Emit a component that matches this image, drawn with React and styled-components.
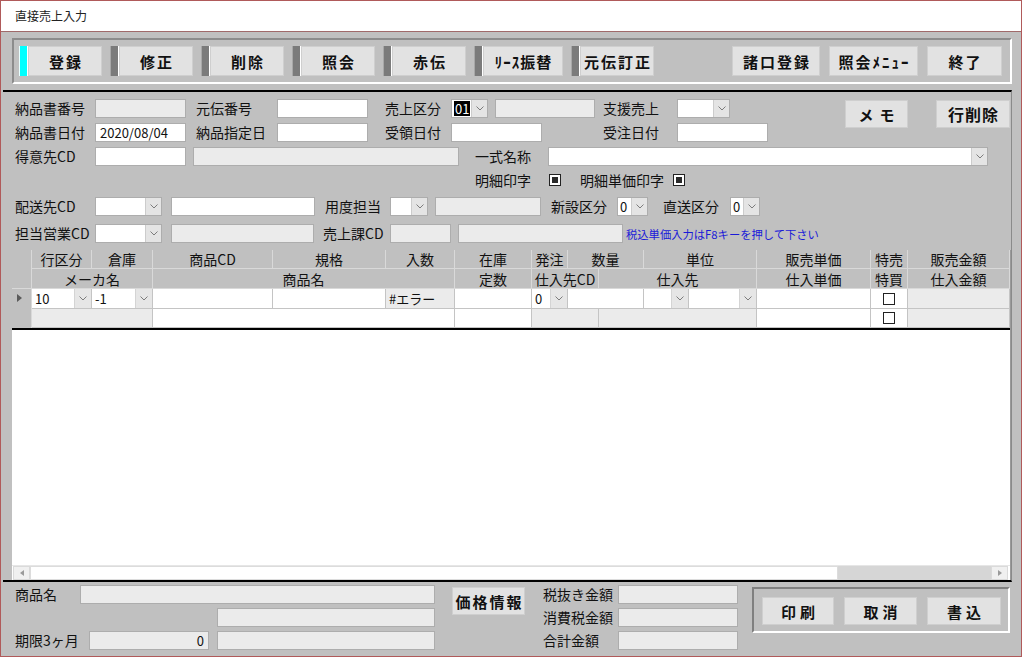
import styled, { createGlobalStyle } from 'styled-components';

const FONT = '"Noto Sans CJK JP", "Noto Sans", sans-serif';

const GlobalStyle = createGlobalStyle`
  html, body { margin: 0; padding: 0; background: #ffffff; }
  body { font-family: ${FONT}; color: #111111; }
  *, *::before, *::after { box-sizing: border-box; }
  button { font-family: ${FONT}; }
`;

const Window = styled.div`
  width: 1022px;
  height: 657px;
  border: 1px solid #b05a5a;
  background: #c0c0c0;
  display: flex;
  flex-direction: column;
  overflow: hidden;
`;

const TitleBar = styled.div`
  height: 31px;
  flex: none;
  background: #ffffff;
  border-bottom: 1px solid #a06a6a;
  padding: 0 0 1px 14px;
  display: flex;
  align-items: center;
  font-size: 12px;
  color: #222222;
`;

const Toolbar = styled.div`
  flex: none;
  margin: 6px 9px 0 11px;
  height: 46px;
  border: 2px solid;
  border-color: #8c8c8c #ffffff #ffffff #8c8c8c;
  display: flex;
  align-items: center;
  padding: 0 8px 0 5px;
`;

const ToolGroup = styled.div`
  display: flex;
  margin-right: 8px;
`;

const Indicator = styled.span`
  width: 9px;
  height: 30px;
  background: ${(p) => (p.$active ? '#00ffff' : '#7b7b7b')};
  border-left: 1px solid ${(p) => (p.$active ? '#e8ffff' : '#a8a8a8')};
  border-right: 1px solid #ffffff;
`;

const ToolButton = styled.button`
  width: ${(p) => p.$w || 74}px;
  height: ${(p) => p.$h || 30}px;
  flex: none;
  margin-left: ${(p) => p.$ml || 0}px;
  margin-top: ${(p) => p.$mt || 0}px;
  background: #e2e2e2;
  border: 1px solid #cfcfcf;
  font-size: ${(p) => p.$size || 15}px;
  font-weight: bold;
  letter-spacing: ${(p) => p.$ls ?? 2}px;
  padding: 0 0 0 ${(p) => p.$ls ?? 2}px;
  color: #111111;
  white-space: nowrap;
`;

const RightTools = styled.div`
  margin-left: auto;
  display: flex;
  gap: 9px;
`;

const MainPanel = styled.div`
  flex: none;
  margin: 6px 9px 0 2px;
  height: 492px;
  border-top: 2px solid #000000;
  border-bottom: 2px solid #000000;
  border-right: 1px solid #8a8a8a;
  display: flex;
  flex-direction: column;
`;

const Form = styled.div`
  flex: none;
  height: 158px;
  padding: 7px 0 0 12px;
`;

const TopBlock = styled.div`
  display: flex;
`;

const TopRows = styled.div`
  display: flex;
  flex-direction: column;
  gap: 5px;
`;

const SideButtons = styled.div`
  margin-left: auto;
  margin-top: 1px;
  display: flex;
  gap: 28px;
  padding-right: 1px;
`;

const FormRow = styled.div`
  display: flex;
  align-items: center;
  height: ${(p) => p.$h || 19}px;
  margin-top: ${(p) => p.$mt || 0}px;
`;

const Label = styled.span`
  flex: none;
  width: ${(p) => p.$w}px;
  margin-left: ${(p) => p.$ml || 0}px;
  font-size: 14px;
  line-height: 19px;
  white-space: nowrap;
  color: #111111;
`;

const Field = styled.div`
  flex: none;
  width: ${(p) => p.$w}px;
  height: 19px;
  margin-left: ${(p) => p.$ml || 0}px;
  background: ${(p) => (p.$gray ? '#ebebeb' : '#ffffff')};
  border: 1px solid #adadad;
  display: flex;
  align-items: center;
  justify-content: ${(p) => (p.$right ? 'flex-end' : 'flex-start')};
  padding: 0 4px;
  font-size: 13px;
  white-space: nowrap;
`;

const ComboBox = styled.div`
  flex: none;
  width: ${(p) => p.$w}px;
  height: 19px;
  margin-left: ${(p) => p.$ml || 0}px;
  display: flex;
  background: #ffffff;
  border: 1px solid #adadad;
`;

const ComboText = styled.span`
  flex: 1;
  display: flex;
  align-items: center;
  padding-left: 2px;
  font-size: 13px;
  overflow: hidden;
`;

const Selected = styled.span`
  background: #000000;
  color: #ffffff;
  line-height: 15px;
  padding: 0 1px;
`;

const DropButton = styled.span`
  flex: none;
  width: 16px;
  background: #e4e4e4;
  border-left: 1px solid #cccccc;
  display: flex;
  align-items: center;
  justify-content: center;
`;

const CheckMark = styled.span`
  flex: none;
  width: 12px;
  height: 12px;
  border: 1px solid #222222;
  background: #ffffff;
  display: flex;
  align-items: center;
  justify-content: center;
  &::after {
    content: '';
    width: 6px;
    height: 6px;
    background: ${(p) => (p.$on ? '#2a2a2a' : 'transparent')};
  }
`;

const Note = styled.span`
  margin-left: ${(p) => p.$ml || 0}px;
  font-size: 11.3px;
  color: #1a1ad8;
  white-space: nowrap;
`;

const GridArea = styled.div`
  flex: 1;
  margin-left: 9px;
  width: 999px;
  background: #ffffff;
  border-right: 1px solid #9a9a9a;
  display: flex;
  flex-direction: column;
`;

const Sheet = styled.div`
  display: grid;
  grid-template-columns: 20px 60px 61px 120px 113px 69px 77px 36px 31px 45px 45px 68px 114px 37px 102px;
  grid-template-rows: 19px 20px 20px 19px;
  border-bottom: 2px solid #000000;
`;

const HeadCell = styled.div`
  grid-column: ${(p) => p.$col};
  grid-row: ${(p) => p.$row};
  background: #c0c0c0;
  border-right: 1px solid #d9d9d9;
  border-bottom: 1px solid #d9d9d9;
  display: flex;
  align-items: center;
  justify-content: center;
  font-size: 14px;
  white-space: nowrap;
`;

const Selector = styled.div`
  grid-column: 1;
  grid-row: 3 / 5;
  background: #c0c0c0;
  border-right: 1px solid #d9d9d9;
  padding: 5px 0 0 5px;
  &::before {
    content: '';
    display: block;
    width: 0;
    height: 0;
    border-left: 5px solid #5a5a5a;
    border-top: 4.5px solid transparent;
    border-bottom: 4.5px solid transparent;
  }
`;

const DataCell = styled.div`
  grid-column: ${(p) => p.$col};
  grid-row: ${(p) => p.$row};
  background: ${(p) => (p.$gray ? '#ebebeb' : '#ffffff')};
  border-right: 1px solid #c4c4c4;
  border-bottom: 1px solid #c4c4c4;
  display: flex;
  align-items: center;
  justify-content: ${(p) => (p.$center ? 'center' : 'flex-start')};
  font-size: 13px;
  padding-left: ${(p) => (p.$center ? 0 : 3)}px;
  white-space: nowrap;
`;

const CellDrop = styled.span`
  margin-left: auto;
  width: 17px;
  height: 100%;
  background: #e6e6e6;
  border-left: 1px solid #d4d4d4;
  display: flex;
  align-items: center;
  justify-content: center;
`;

const GridBlank = styled.div`
  flex: 1;
`;

const HScroll = styled.div`
  flex: none;
  height: 15px;
  display: flex;
  align-items: stretch;
  background: #ffffff;
  border-top: 1px solid #e6e6e6;
`;

const ScrollArrow = styled.span`
  flex: none;
  width: 17px;
  margin: 0 ${(p) => (p.$right ? 2 : 0)}px 0 ${(p) => (p.$right ? 0 : 1)}px;
  background: #f0f0f0;
  border: 1px solid #dadada;
  display: flex;
  align-items: center;
  justify-content: center;
  &::before {
    content: '';
    width: 0;
    height: 0;
    border-top: 3.5px solid transparent;
    border-bottom: 3.5px solid transparent;
    ${(p) => (p.$right ? 'border-left: 4px solid #9a9a9a;' : 'border-right: 4px solid #9a9a9a;')}
  }
`;

const ScrollThumb = styled.span`
  flex: none;
  width: 808px;
  background: #ffffff;
  border: 1px solid #dcdcdc;
`;

const ScrollTrack = styled.span`
  flex: 1;
  background: #d6d6d6;
`;

const Footer = styled.div`
  flex: 1;
  display: flex;
  align-items: flex-start;
  padding: 3px 0 0 14px;
`;

const FooterCol = styled.div`
  flex: none;
  width: ${(p) => p.$w}px;
  margin-left: ${(p) => p.$ml || 0}px;
  display: flex;
  flex-direction: column;
  gap: 4px;
`;

const ActionFrame = styled.div`
  flex: none;
  width: 258px;
  height: 46px;
  margin: 2px 0 0 14px;
  border: 2px solid;
  border-color: #808080 #ffffff #ffffff #808080;
  padding: 8px 0 0 8px;
  display: flex;
  gap: 10px;
`;

const Chevron = () => (
  <svg width="8" height="5" viewBox="0 0 8 5">
    <polyline points="0.5,0.5 4,4 7.5,0.5" fill="none" stroke="#7c7c7c" strokeWidth="1" />
  </svg>
);

function Combo({ w, ml, value, selected }) {
  return (
    <ComboBox $w={w} $ml={ml}>
      <ComboText>{selected ? <Selected>{value}</Selected> : value}</ComboText>
      <DropButton>
        <Chevron />
      </DropButton>
    </ComboBox>
  );
}

const leftTools = [
  { label: '登録', active: true },
  { label: '修正' },
  { label: '削除' },
  { label: '照会' },
  { label: '赤伝' },
  { label: 'ﾘｰｽ振替', w: 80, ls: 1 },
  { label: '元伝訂正' },
];

export default function App() {
  return (
    <>
      <GlobalStyle />
      <Window>
        <TitleBar>直接売上入力</TitleBar>

        <Toolbar>
          {leftTools.map((t) => (
            <ToolGroup key={t.label}>
              <Indicator $active={t.active} />
              <ToolButton $w={t.w} $ls={t.ls}>{t.label}</ToolButton>
            </ToolGroup>
          ))}
          <RightTools>
            <ToolButton $w={88}>諸口登録</ToolButton>
            <ToolButton $w={89}>照会ﾒﾆｭｰ</ToolButton>
            <ToolButton $w={75}>終了</ToolButton>
          </RightTools>
        </Toolbar>

        <MainPanel>
          <Form>
            <TopBlock>
              <TopRows>
                <FormRow>
                  <Label $w={80}>納品書番号</Label>
                  <Field $w={91} $gray />
                  <Label $w={81} $ml={10}>元伝番号</Label>
                  <Field $w={91} />
                  <Label $w={66} $ml={17}>売上区分</Label>
                  <Combo w={37} value="01" selected />
                  <Field $w={100} $ml={7} $gray />
                  <Label $w={74} $ml={8}>支援売上</Label>
                  <Combo w={53} />
                </FormRow>
                <FormRow>
                  <Label $w={80}>納品書日付</Label>
                  <Field $w={91}>2020/08/04</Field>
                  <Label $w={81} $ml={10}>納品指定日</Label>
                  <Field $w={91} />
                  <Label $w={66} $ml={17}>受領日付</Label>
                  <Field $w={91} />
                  <Label $w={74} $ml={61}>受注日付</Label>
                  <Field $w={91} />
                </FormRow>
              </TopRows>
              <SideButtons>
                <ToolButton $w={63} $h={28} $ls={6}>メモ</ToolButton>
                <ToolButton $w={74} $h={28} $size={16} $ls={1}>行削除</ToolButton>
              </SideButtons>
            </TopBlock>

            <FormRow $mt={5}>
              <Label $w={80}>得意先CD</Label>
              <Field $w={91} />
              <Field $w={266} $ml={7} $gray />
              <Label $w={73} $ml={16}>一式名称</Label>
              <Combo w={440} />
            </FormRow>

            <FormRow $mt={4} $h={20}>
              <Label $w={74} $ml={460}>明細印字</Label>
              <CheckMark $on />
              <Label $w={93} $ml={19}>明細単価印字</Label>
              <CheckMark $on />
            </FormRow>

            <FormRow $mt={7}>
              <Label $w={80}>配送先CD</Label>
              <Combo w={67} />
              <Field $w={144} $ml={9} />
              <Label $w={65} $ml={10}>用度担当</Label>
              <Combo w={38} />
              <Field $w={106} $ml={7} $gray />
              <Label $w={66} $ml={10}>新設区分</Label>
              <Combo w={31} value="0" />
              <Label $w={67} $ml={15}>直送区分</Label>
              <Combo w={30} value="0" />
            </FormRow>

            <FormRow $mt={8}>
              <Label $w={80}>担当営業CD</Label>
              <Combo w={67} />
              <Field $w={143} $ml={9} $gray />
              <Label $w={67} $ml={9}>売上課CD</Label>
              <Field $w={61} $gray />
              <Field $w={165} $ml={7} $gray />
              <Note $ml={3}>税込単価入力はF8キーを押して下さい</Note>
            </FormRow>
          </Form>

          <GridArea>
            <Sheet>
              <HeadCell $col="1" $row="1 / 3" />
              <HeadCell $col="2" $row="1">行区分</HeadCell>
              <HeadCell $col="3" $row="1">倉庫</HeadCell>
              <HeadCell $col="4" $row="1">商品CD</HeadCell>
              <HeadCell $col="5" $row="1">規格</HeadCell>
              <HeadCell $col="6" $row="1">入数</HeadCell>
              <HeadCell $col="7" $row="1">在庫</HeadCell>
              <HeadCell $col="8" $row="1">発注</HeadCell>
              <HeadCell $col="9 / 11" $row="1">数量</HeadCell>
              <HeadCell $col="11 / 13" $row="1">単位</HeadCell>
              <HeadCell $col="13" $row="1">販売単価</HeadCell>
              <HeadCell $col="14" $row="1">特売</HeadCell>
              <HeadCell $col="15" $row="1">販売金額</HeadCell>

              <HeadCell $col="2 / 4" $row="2">メーカ名</HeadCell>
              <HeadCell $col="4 / 7" $row="2">商品名</HeadCell>
              <HeadCell $col="7" $row="2">定数</HeadCell>
              <HeadCell $col="8 / 10" $row="2">仕入先CD</HeadCell>
              <HeadCell $col="10 / 13" $row="2">仕入先</HeadCell>
              <HeadCell $col="13" $row="2">仕入単価</HeadCell>
              <HeadCell $col="14" $row="2">特買</HeadCell>
              <HeadCell $col="15" $row="2">仕入金額</HeadCell>

              <Selector />
              <DataCell $col="2" $row="3">
                10
                <CellDrop><Chevron /></CellDrop>
              </DataCell>
              <DataCell $col="3" $row="3">
                -1
                <CellDrop><Chevron /></CellDrop>
              </DataCell>
              <DataCell $col="4" $row="3" />
              <DataCell $col="5" $row="3" />
              <DataCell $col="6" $row="3" $gray>#エラー</DataCell>
              <DataCell $col="7" $row="3" />
              <DataCell $col="8" $row="3">
                0
                <CellDrop><Chevron /></CellDrop>
              </DataCell>
              <DataCell $col="9 / 11" $row="3" />
              <DataCell $col="11" $row="3">
                <CellDrop><Chevron /></CellDrop>
              </DataCell>
              <DataCell $col="12" $row="3">
                <CellDrop><Chevron /></CellDrop>
              </DataCell>
              <DataCell $col="13" $row="3" />
              <DataCell $col="14" $row="3" $center><CheckMark /></DataCell>
              <DataCell $col="15" $row="3" $gray />

              <DataCell $col="2 / 4" $row="4" $gray />
              <DataCell $col="4 / 7" $row="4" />
              <DataCell $col="7" $row="4" />
              <DataCell $col="8 / 10" $row="4" $gray />
              <DataCell $col="10 / 13" $row="4" $gray />
              <DataCell $col="13" $row="4" />
              <DataCell $col="14" $row="4" $center><CheckMark /></DataCell>
              <DataCell $col="15" $row="4" $gray />
            </Sheet>
            <GridBlank />
            <HScroll>
              <ScrollArrow />
              <ScrollThumb />
              <ScrollTrack />
              <ScrollArrow $right />
            </HScroll>
          </GridArea>
        </MainPanel>

        <Footer>
          <FooterCol $w={421}>
            <FormRow>
              <Label $w={65}>商品名</Label>
              <Field $w={355} $gray />
            </FormRow>
            <FormRow>
              <Field $w={218} $ml={202} $gray />
            </FormRow>
            <FormRow>
              <Label $w={74}>期限3ヶ月</Label>
              <Field $w={120} $gray $right>0</Field>
              <Field $w={218} $ml={8} $gray />
            </FormRow>
          </FooterCol>

          <ToolButton $w={73} $h={28} $ml={16} $mt={2} $ls={2}>価格情報</ToolButton>

          <FooterCol $w={195} $ml={18}>
            <FormRow>
              <Label $w={75}>税抜き金額</Label>
              <Field $w={120} $gray />
            </FormRow>
            <FormRow>
              <Label $w={75}>消費税金額</Label>
              <Field $w={120} $gray />
            </FormRow>
            <FormRow>
              <Label $w={75}>合計金額</Label>
              <Field $w={120} $gray />
            </FormRow>
          </FooterCol>

          <ActionFrame>
            <ToolButton $w={72} $h={28} $ls={4}>印刷</ToolButton>
            <ToolButton $w={73} $h={28} $ls={4}>取消</ToolButton>
            <ToolButton $w={74} $h={28} $ls={4}>書込</ToolButton>
          </ActionFrame>
        </Footer>
      </Window>
    </>
  );
}
